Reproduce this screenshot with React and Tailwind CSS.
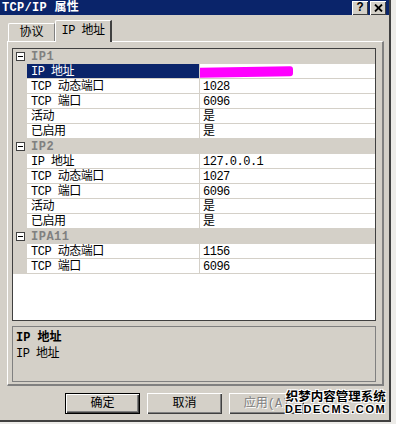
const groups = [
  {
    name: "IP1",
    rows: [
      { k: "IP 地址", v: "", sel: true },
      { k: "TCP 动态端口", v: "1028" },
      { k: "TCP 端口", v: "6096" },
      { k: "活动", v: "是" },
      { k: "已启用", v: "是" },
    ],
  },
  {
    name: "IP2",
    rows: [
      { k: "IP 地址", v: "127.0.0.1" },
      { k: "TCP 动态端口", v: "1027" },
      { k: "TCP 端口", v: "6096" },
      { k: "活动", v: "是" },
      { k: "已启用", v: "是" },
    ],
  },
  {
    name: "IPA11",
    rows: [
      { k: "TCP 动态端口", v: "1156" },
      { k: "TCP 端口", v: "6096" },
    ],
  },
];

function Btn({ children, def, disabled }) {
  return (
    <div
      className={
        "w-[75px] h-[21px] flex items-center justify-center bg-[#d4d0c8] " +
        (def
          ? "border border-black shadow-[inset_1px_1px_0_#fff,inset_-1px_-1px_0_#404040,inset_-2px_-2px_0_#808080]"
          : "shadow-[inset_1px_1px_0_#fff,inset_-1px_-1px_0_#404040,inset_-2px_-2px_0_#808080]")
      }
    >
      <span
        className={
          disabled
            ? "text-[#808080] [text-shadow:1px_1px_0_#fff]"
            : "text-black"
        }
      >
        {children}
      </span>
    </div>
  );
}

function App() {
  return (
    <div className="relative w-[396px] h-[424px] overflow-hidden bg-[#ecebe8] text-[12px] leading-none text-black font-['Liberation_Mono','Noto_Sans_CJK_SC',monospace]">
      <div className="w-[391px] h-[422px] bg-[#d4d0c8] border-r-2 border-b-2 border-r-[#404040] border-b-[#404040] flex flex-col">
        {/* title bar */}
        <div className="h-[15px] bg-[#0a246a] flex items-center pl-[2px] pr-[3px]">
          <span className="text-white font-bold text-[12px] tracking-[0.3px]">TCP/IP 属性</span>
          <div className="ml-auto flex gap-[2px]">
            <div className="w-[16px] h-[14px] bg-[#d4d0c8] flex items-center justify-center font-bold text-[12px] shadow-[inset_1px_1px_0_#fff,inset_-1px_-1px_0_#404040]">
              ?
            </div>
            <div className="w-[16px] h-[14px] bg-[#d4d0c8] flex items-center justify-center shadow-[inset_1px_1px_0_#fff,inset_-1px_-1px_0_#404040]">
              <svg width="9" height="8" viewBox="0 0 9 8">
                <path d="M1 0.5 L8 7.5 M8 0.5 L1 7.5" stroke="#000" strokeWidth="1.8" />
              </svg>
            </div>
          </div>
        </div>

        {/* tabs */}
        <div className="pl-[7px] mt-[5px] flex items-end h-[21px]">
          <div className="ml-[1px] w-[47px] h-[18px] border-l border-t border-white border-r border-r-[#808080] rounded-tl-[2px] flex items-center justify-center pt-[1px]">
            协议
          </div>
          <div className="relative z-10 -mb-px w-[57px] h-[22px] bg-[#d4d0c8] border-l border-t border-white border-r-2 border-r-[#404040] rounded-tl-[2px] flex items-center justify-center pb-[2px] tracking-[-0.5px]">
            IP 地址
          </div>
        </div>

        {/* panel */}
        <div className="ml-[7px] w-[377px] h-[345px] border-l border-t border-white border-r-2 border-b-2 border-r-[#808080] border-b-[#808080] pl-[4px] pt-[6px] flex flex-col tracking-[-0.5px]">
          {/* grid */}
          <div className="w-[364px] h-[273px] border border-[#404040] bg-white">
            {groups.map((g) => (
              <div key={g.name}>
                <div className="h-[15px] bg-[#d4d0c8] flex items-center">
                  <div className="w-[14px] flex justify-center">
                    <div className="w-[9px] h-[9px] border border-[#404040] bg-white flex items-center justify-center">
                      <div className="w-[5px] h-px bg-black" />
                    </div>
                  </div>
                  <span className="ml-[4px] font-bold text-[#808080] tracking-[0.5px]">{g.name}</span>
                </div>
                {g.rows.map((r, i) => (
                  <div key={i} className="h-[15px] flex bg-[#d4d0c8]">
                    <div className="w-[14px]" />
                    <div
                      className={
                        "w-[172px] flex items-center pl-[4px] pt-[1px] border-b border-[#d4d0c8] " +
                        (r.sel ? "bg-[#0a246a] text-white" : "bg-white")
                      }
                    >
                      {r.k}
                    </div>
                    <div className="flex-1 flex items-center pl-[3px] pt-[1px] bg-white border-l border-b border-[#d4d0c8]">
                      {r.sel ? (
                        <div className="-ml-[3px] w-[93px] h-[10px] bg-[#ff00ff] rounded-r-[3px] -skew-y-1" />
                      ) : (
                        r.v
                      )}
                    </div>
                  </div>
                ))}
              </div>
            ))}
          </div>

          {/* description */}
          <div className="mt-[5px] w-[364px] h-[56px] border border-[#808080] pl-[3px] pt-[5px] flex flex-col gap-[4px]">
            <span className="font-bold tracking-[0px]">IP 地址</span>
            <span>IP 地址</span>
          </div>
        </div>

        {/* buttons */}
        <div className="mt-[7px] pl-[65px] flex gap-[7px]">
          <Btn def>确定</Btn>
          <Btn>取消</Btn>
          <Btn disabled>应用(A)</Btn>
        </div>
      </div>

      {/* watermark */}
      <div className="absolute left-[285px] top-[389px] flex flex-col items-center font-['Noto_Sans_CJK_SC',sans-serif] font-bold text-black [text-shadow:1px_1px_0_#fff,-1px_-1px_0_#fff,1px_-1px_0_#fff,-1px_1px_0_#fff]">
        <span className="text-[12.5px] leading-[14px]">织梦内容管理系统</span>
        <span className="text-[11px] leading-[12px] tracking-[1.6px] font-['Liberation_Sans',sans-serif]">DEDECMS.COM</span>
      </div>
    </div>
  );
}

export default App;
